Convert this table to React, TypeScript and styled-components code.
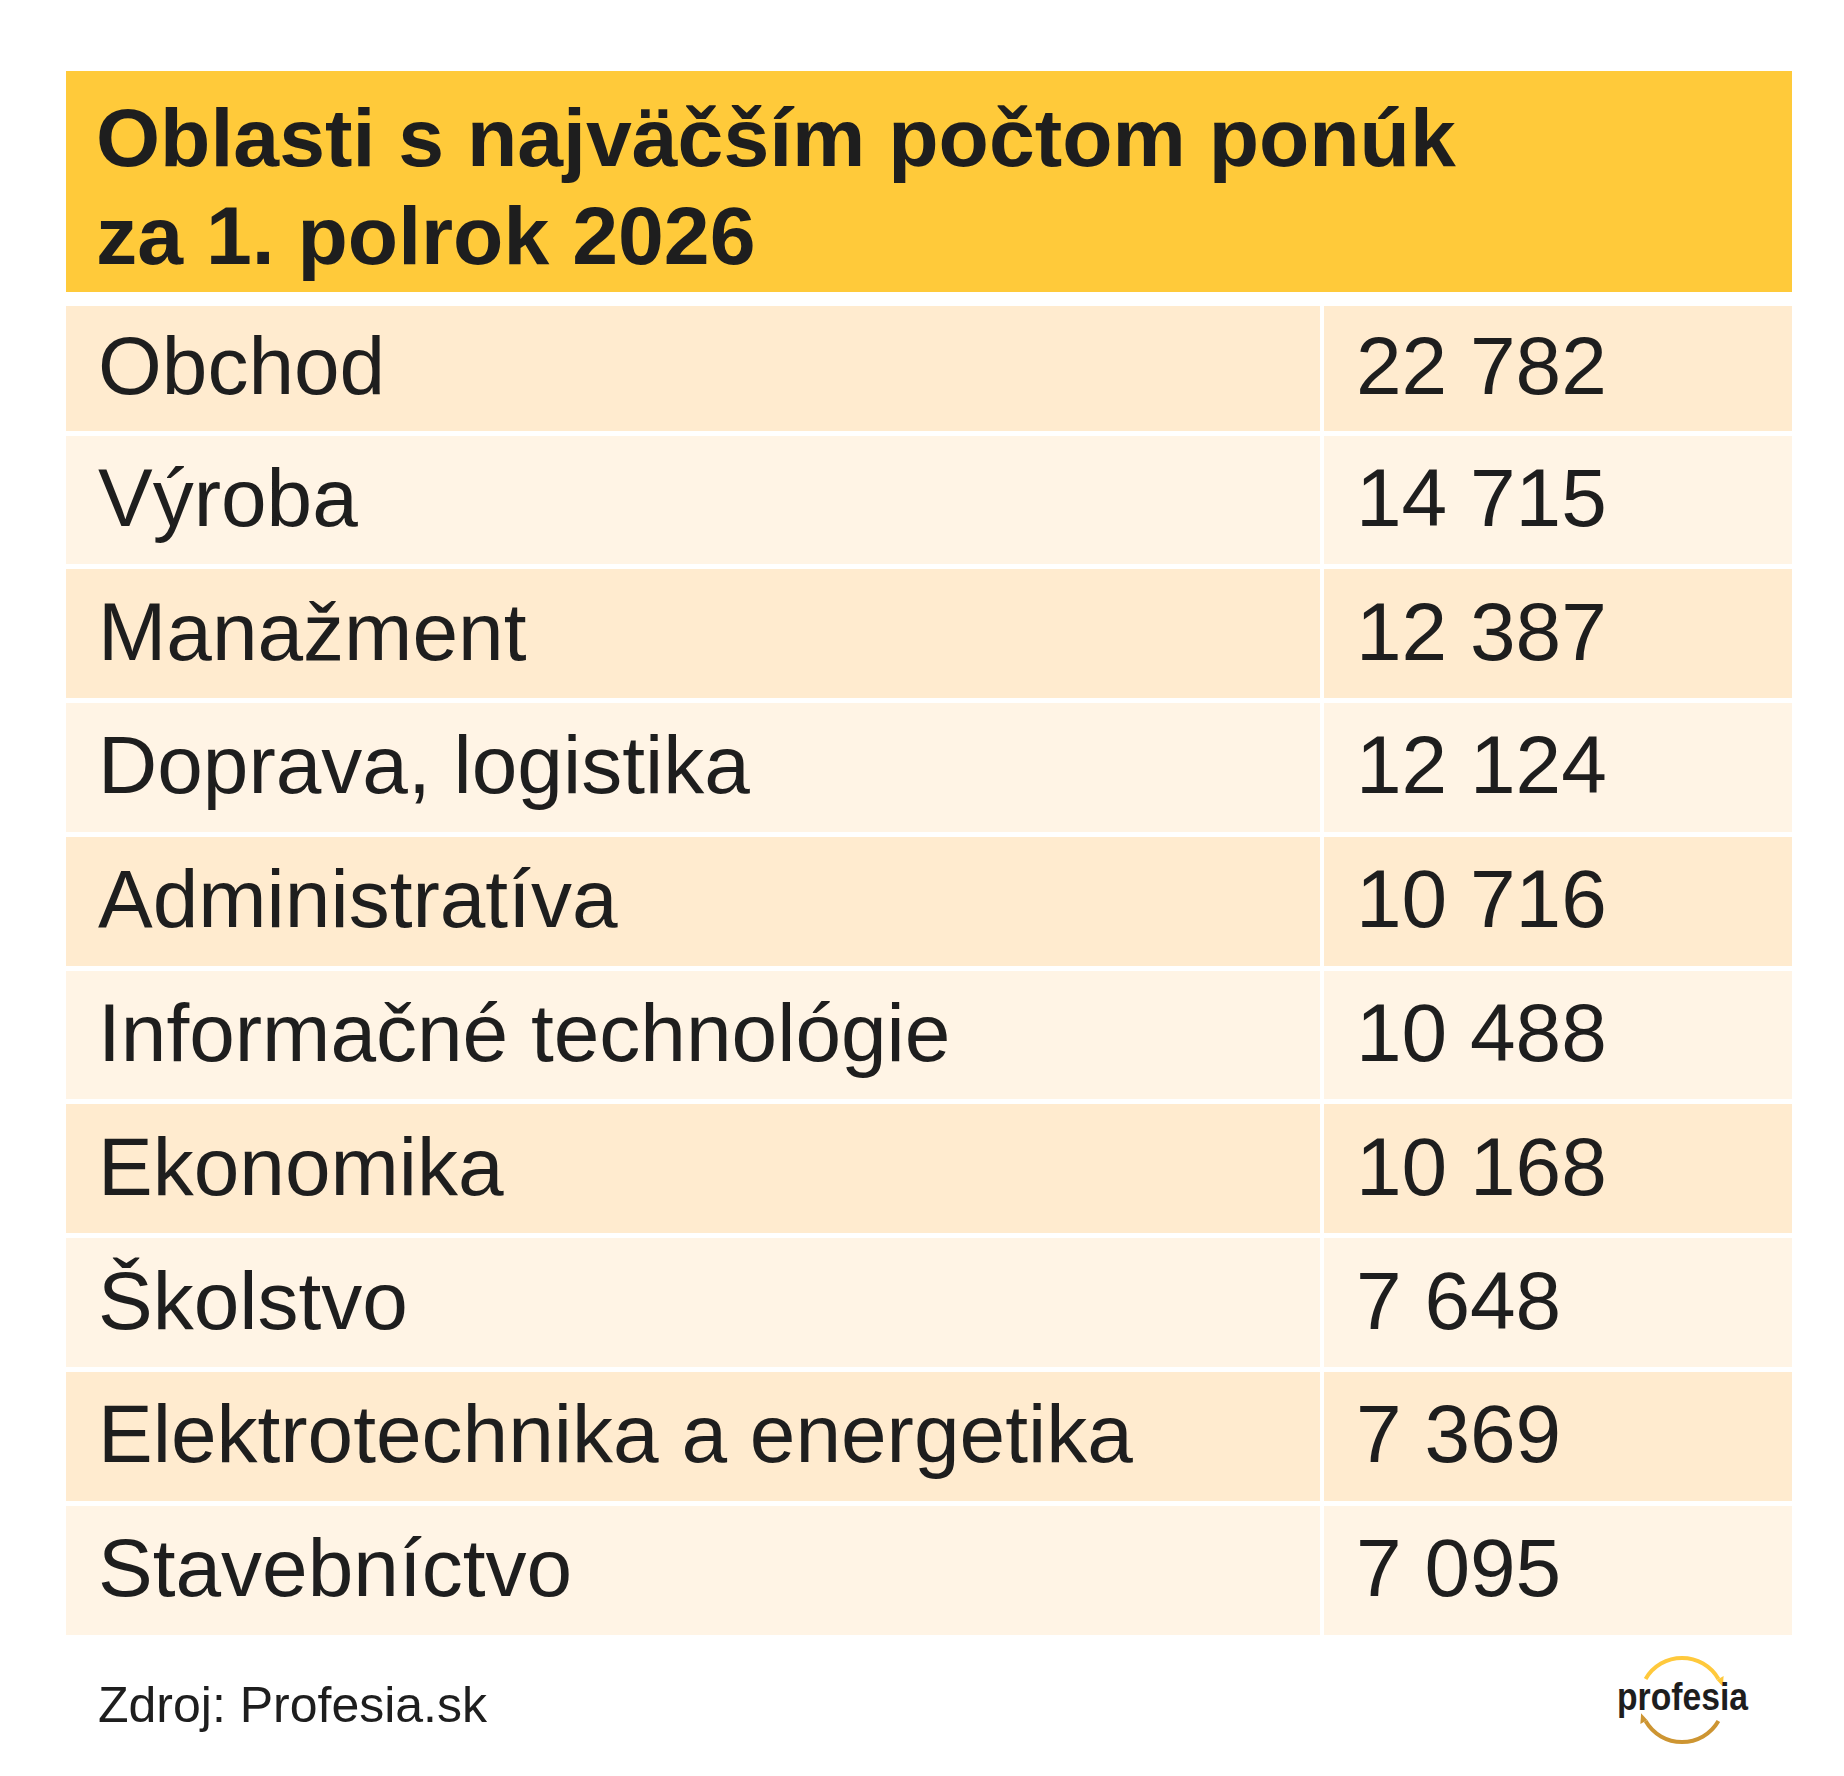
import React from "react";
import styled, { createGlobalStyle } from "styled-components";

const GlobalStyle = createGlobalStyle`
  html, body {
    margin: 0;
    padding: 0;
    background: #ffffff;
  }
  body {
    font-family: "Liberation Sans", Arial, sans-serif;
    color: #1e1e1e;
  }
`;

const Page = styled.div`
  width: 1726px;
  margin-left: 66px;
  padding-top: 70.5px;
  display: flex;
  flex-direction: column;
`;

const Header = styled.h1`
  margin: 0;
  height: 221.5px;
  box-sizing: border-box;
  padding: 17px 0 0 30px;
  background: #ffca3a;
  font-family: "Liberation Sans", Arial, sans-serif;
  font-weight: 700;
  font-size: 82.4px;
  line-height: 98px;
  color: #1e1e1e;
`;

const Table = styled.div`
  margin-top: 14px;
  display: grid;
  grid-template-rows: 124.5px repeat(9, 128.8px);
  row-gap: 5px;
`;

const Row = styled.div`
  display: grid;
  grid-template-columns: 1254px 1fr;
  column-gap: 4px;
`;

const Cell = styled.div<{ $shade: boolean }>`
  display: flex;
  align-items: center;
  padding-left: 32px;
  padding-bottom: 4px;
  background: ${(p) => (p.$shade ? "#ffebcf" : "#fff4e5")};
  font-size: 82px;
  line-height: 1;
  color: #1e1e1e;
  white-space: nowrap;
`;

const Footer = styled.div`
  display: flex;
  justify-content: space-between;
  align-items: flex-start;
  padding-top: 10px;
`;

const Source = styled.div`
  margin-top: 32.75px;
  padding-left: 32px;
  font-size: 50px;
  line-height: 57.5px;
  color: #1e1e1e;
`;

const LogoSvg = styled.svg`
  display: block;
  width: 172px;
  height: 105px;
  margin-right: 10px;
  overflow: visible;
`;

const Logo = () => (
  <LogoSvg viewBox="0 0 172 105" aria-label="profesia">
    <path
      d="M35.6 34 A42 42 0 0 1 108.4 34"
      fill="none"
      stroke="#ffc93c"
      strokeWidth={4}
    />
    <polygon points="113.6,31 112.9,41.8 106.7,35" fill="#ffc93c" />
    <path
      d="M108.4 76 A42 42 0 0 1 35.6 76"
      fill="none"
      stroke="#cd9532"
      strokeWidth={4}
    />
    <polygon points="30.4,79 31.1,68.2 37.3,75" fill="#cd9532" />
    <text
      x={7}
      y={65}
      fontFamily="'Liberation Sans', Arial, sans-serif"
      fontWeight={700}
      fontSize={38}
      fill="#1e1e1e"
      textLength={131}
      lengthAdjust="spacingAndGlyphs"
    >
      profesia
    </text>
  </LogoSvg>
);

const data: [string, string][] = [
  ["Obchod", "22 782"],
  ["Výroba", "14 715"],
  ["Manažment", "12 387"],
  ["Doprava, logistika", "12 124"],
  ["Administratíva", "10 716"],
  ["Informačné technológie", "10 488"],
  ["Ekonomika", "10 168"],
  ["Školstvo", "7 648"],
  ["Elektrotechnika a energetika", "7 369"],
  ["Stavebníctvo", "7 095"],
];

export default function App() {
  return (
    <>
      <GlobalStyle />
      <Page>
        <Header>
          Oblasti s najväčším počtom ponúk
          <br />
          za 1. polrok 2026
        </Header>
        <Table>
          {data.map(([name, value], i) => (
            <Row key={name}>
              <Cell $shade={i % 2 === 0}>{name}</Cell>
              <Cell $shade={i % 2 === 0}>{value}</Cell>
            </Row>
          ))}
        </Table>
        <Footer>
          <Source>Zdroj: Profesia.sk</Source>
          <Logo />
        </Footer>
      </Page>
    </>
  );
}
